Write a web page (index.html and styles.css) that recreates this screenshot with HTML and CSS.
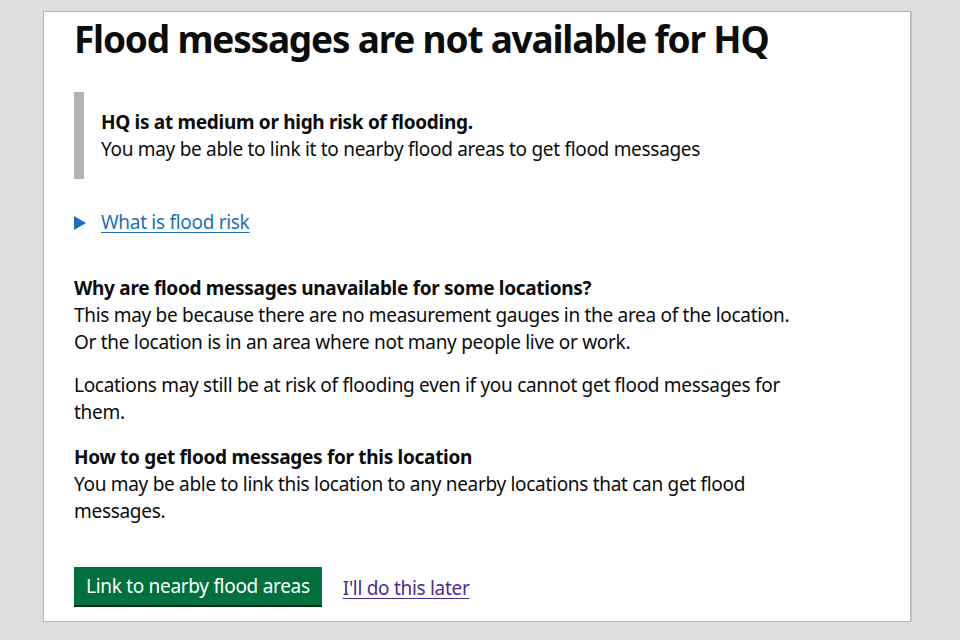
FILE: index.html
```html
<!DOCTYPE html>
<html lang="en">
<head>
<meta charset="utf-8">
<title>Flood messages are not available for HQ</title>
<link rel="stylesheet" href="styles.css">
</head>
<body>
<main class="card">
  <h1 class="title">Flood messages are not available for HQ</h1>
  <div class="inset">
    <p class="inset-strong">HQ is at medium or high risk of flooding.</p>
    <p class="inset-text">You may be able to link it to nearby flood areas to get flood messages</p>
  </div>
  <div class="details">
    <span class="arrow"></span>
    <a class="link" href="#">What is flood risk</a>
  </div>
  <h2 class="subhead">Why are flood messages unavailable for some locations?</h2>
  <p class="body">This may be because there are no measurement gauges in the area of the location.<br>Or the location is in an area where not many people live or work.</p>
  <p class="body para">Locations may still be at risk of flooding even if you cannot get flood messages for them.</p>
  <h2 class="subhead">How to get flood messages for this location</h2>
  <p class="body">You may be able to link this location to any nearby locations that can get flood messages.</p>
  <div class="actions">
    <button class="button" type="button">Link to nearby flood areas</button>
    <a class="link visited" href="#">I'll do this later</a>
  </div>
</main>
</body>
</html>
```

FILE: styles.css
```css
html, body {
  margin: 0;
  padding: 0;
  background: #dedede;
}
body {
  padding: 11px 0 0 43px;
  font-family: "Noto Sans", "Liberation Sans", sans-serif;
  color: #0b0c0c;
  letter-spacing: -0.3px;
}
.card {
  box-sizing: border-box;
  width: 868px;
  height: 611px;
  background: #fff;
  border: 1px solid #b6b6b6;
  box-shadow: 1px 1px 0 #c4c4c4;
  padding: 0 30px;
}
.title {
  margin: 0;
  padding-top: 3px;
  font-size: 37px;
  line-height: 48px;
  font-weight: 700;
  letter-spacing: -1.2px;
}
.inset {
  margin-top: 29px;
  border-left: 10px solid #b1b4b6;
  padding: 17px 0 13px 17px;
  height: 57px;
}
.inset p { margin: 0; font-size: 19px; line-height: 27px; }
.inset-strong { font-weight: 700; }
.details {
  margin-top: 30px;
  display: flex;
  align-items: center;
  gap: 15px;
}
.arrow {
  width: 0; height: 0;
  border-left: 12px solid #1d70b8;
  border-top: 7px solid transparent;
  border-bottom: 7px solid transparent;
}
.link {
  font-size: 19px;
  line-height: 27px;
  color: #1d70b8;
  text-decoration: underline;
  text-underline-offset: 3px;
  text-decoration-thickness: 1px;
}
.visited { color: #4c2c92; padding-top: 4px; }
.subhead {
  margin: 39px 0 0;
  font-size: 19px;
  line-height: 27px;
  font-weight: 700;
}
.body {
  margin: 0;
  font-size: 19px;
  line-height: 27px;
  max-width: 722px;
}
.para { margin-top: 16px; }
.subhead + .body { margin-top: 0; }
.para + .subhead { margin-top: 18px; }
.actions {
  margin-top: 42px;
  display: flex;
  align-items: center;
  gap: 21px;
}
.button {
  font-family: inherit;
  letter-spacing: inherit;
  font-size: 19px;
  line-height: 25px;
  color: #fff;
  background: #00703c;
  border: 0;
  border-radius: 0;
  box-shadow: 0 2px 0 #002d18;
  padding: 7px 12px 6px;
  height: 38px;
}
```
